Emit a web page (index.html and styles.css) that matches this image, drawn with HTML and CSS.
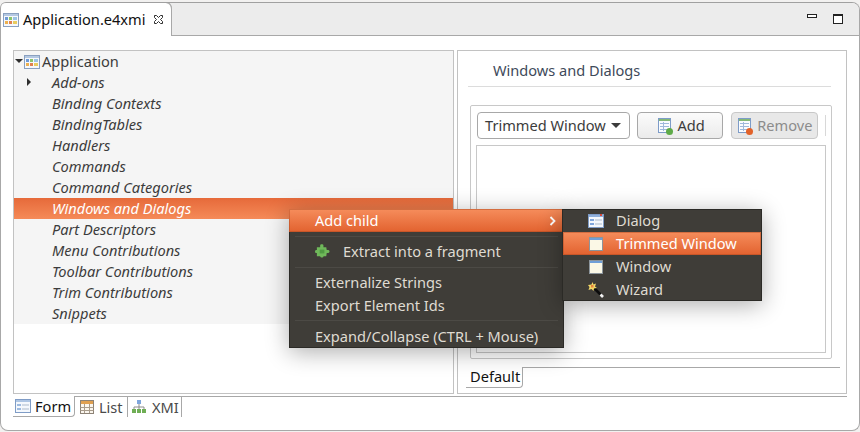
FILE: index.html
```html
<!DOCTYPE html>
<html lang="en">
<head>
<meta charset="utf-8">
<title>Application.e4xmi</title>
<link rel="stylesheet" href="styles.css">
</head>
<body>
<svg class="defs" width="0" height="0" aria-hidden="true">
  <symbol id="i-app" viewBox="0 0 16 16">
    <rect x="0.500" y="1.500" width="15" height="13" fill="#f6f8fb" stroke="#8aa0c0"/>
    <rect x="1" y="2" width="14" height="2" fill="#b4c8e2"/>
    <rect x="2" y="5" width="3" height="3" fill="#6f9ad6"/><rect x="6" y="5" width="3" height="3" fill="#8cc46c"/><rect x="10" y="5" width="4" height="3" fill="#9cc4e4"/>
    <rect x="2" y="9" width="3" height="3" fill="#ecb050"/><rect x="6" y="9" width="3" height="3" fill="#e08050"/><rect x="10" y="9" width="4" height="3" fill="#e8cc60"/>
  </symbol>
  <symbol id="i-form" viewBox="0 0 16 16">
    <rect x="0.500" y="1.500" width="15" height="13" fill="#f4f8fd" stroke="#7f9cc6"/>
    <rect x="1" y="2" width="14" height="2" fill="#adc5e4"/>
    <rect x="2" y="6" width="4" height="2" fill="#9dbae0"/><rect x="2" y="10" width="4" height="2" fill="#9dbae0"/>
    <rect x="7" y="6" width="7" height="2" fill="#d0d9e4"/><rect x="7" y="10" width="7" height="2" fill="#d0d9e4"/>
  </symbol>
  <symbol id="i-dialog" viewBox="0 0 16 16">
    <rect x="0.500" y="1.500" width="15" height="13" fill="#f4f8fd" stroke="#7f9cc6"/>
    <rect x="1" y="2" width="14" height="2" fill="#8fb0dc"/>
    <rect x="12" y="1" width="2" height="2" fill="#d84a3a"/>
    <rect x="2" y="6" width="4" height="2" fill="#7fa6dc"/><rect x="2" y="10" width="4" height="2" fill="#7fa6dc"/>
    <rect x="7" y="6" width="7" height="2" fill="#d0d9e4"/><rect x="7" y="10" width="7" height="2" fill="#d0d9e4"/>
  </symbol>
  <symbol id="i-window" viewBox="0 0 14 14">
    <rect x="0.500" y="0.500" width="13" height="13" fill="#fbf8e6" stroke="#8c959c"/>
    <rect x="1" y="1" width="12" height="2" fill="#6f9fd8"/>
  </symbol>
  <symbol id="i-table" viewBox="0 0 16 16">
    <rect x="1.500" y="1.500" width="13" height="13" fill="#fbf6ee" stroke="#8d8377"/>
    <rect x="2" y="2" width="12" height="3" fill="#e0a050"/>
    <path d="M1.500 8.500h13M1.500 11.500h13M5.500 5v9M10.500 5v9" stroke="#a89c8c" fill="none"/>
  </symbol>
  <symbol id="i-tree" viewBox="0 0 16 16">
    <rect x="6" y="1" width="4" height="4" fill="#7fa6dc"/>
    <path d="M8 5v3M3 10V8h10v2M8 8v2" stroke="#8d8d8d" fill="none"/>
    <rect x="1" y="10" width="4" height="4" fill="#6fae55"/><rect x="6" y="10" width="4" height="4" fill="#6fae55"/><rect x="11" y="10" width="4" height="4" fill="#6fae55"/>
  </symbol>
  <symbol id="i-sheet" viewBox="0 0 16 16">
    <rect x="1.500" y="0.500" width="12" height="14" fill="#fafcff" stroke="#7d9cc8"/>
    <rect x="2" y="1" width="11" height="2" fill="#84b878"/>
    <path d="M3 5.500h9M3 8.500h9M3 11.500h9M6.500 4v9" stroke="#9fb9dc" fill="none"/>
  </symbol>
</svg>

<main class="editor">
  <header class="tabbar">
    <div class="filetab">
      <svg class="ico"><use href="#i-app"/></svg>
      <span class="filetab-name">Application.e4xmi</span>
      <svg class="close" viewBox="0 0 11 11"><path d="M1.500 1.500h2l2 2 2-2h2v2l-2 2 2 2v2h-2l-2-2-2 2h-2v-2l2-2-2-2z" fill="#fff" stroke="#2e2e2e"/></svg>
    </div>
    <div class="winctl">
      <span class="ctl-min"></span>
      <span class="ctl-max"></span>
    </div>
  </header>

  <section class="workspace">
    <div class="panes">
      <div class="tree-pane">
        <ul class="tree">
          <li class="row row-root"><span class="tw tw-open"></span><svg class="ico"><use href="#i-app"/></svg><span>Application</span></li>
          <li class="row"><span class="tw tw-closed"></span><em>Add-ons</em></li>
          <li class="row"><em>Binding Contexts</em></li>
          <li class="row"><em>BindingTables</em></li>
          <li class="row"><em>Handlers</em></li>
          <li class="row"><em>Commands</em></li>
          <li class="row"><em>Command Categories</em></li>
          <li class="row row-sel"><em>Windows and Dialogs</em></li>
          <li class="row"><em>Part Descriptors</em></li>
          <li class="row"><em>Menu Contributions</em></li>
          <li class="row"><em>Toolbar Contributions</em></li>
          <li class="row"><em>Trim Contributions</em></li>
          <li class="row"><em>Snippets</em></li>
        </ul>
      </div>
      <div class="detail-pane">
        <h2 class="detail-title">Windows and Dialogs</h2>
        <div class="group">
          <div class="toolbar">
            <div class="combo"><span>Trimmed Window</span><i class="caret"></i></div>
            <div class="btn"><svg class="ico"><use href="#i-sheet"/></svg><b class="badge badge-add"></b><span>Add</span></div>
            <div class="btn btn-off"><svg class="ico"><use href="#i-sheet"/></svg><b class="badge badge-rem"></b><span>Remove</span></div>
            <i class="toolbar-end"></i>
          </div>
          <div class="listbox"></div>
        </div>
        <div class="subtabs">
          <div class="subtab">Default</div>
          <div class="subtab-rest"></div>
        </div>
      </div>
    </div>
    <nav class="bottomtabs">
      <div class="btab btab-on"><svg class="ico"><use href="#i-form"/></svg><span>Form</span></div>
      <div class="btab btab-list"><svg class="ico"><use href="#i-table"/></svg><span>List</span></div>
      <div class="btab btab-xmi"><svg class="ico"><use href="#i-tree"/></svg><span>XMI</span></div>
      <div class="btab-rest"></div>
    </nav>
  </section>
</main>

<div class="menu menu-main">
  <div class="mi mi-hot mi-first"><span>Add child</span><svg class="chev" viewBox="0 0 7 10"><path d="M1.500 1l4 4-4 4" fill="none" stroke="#fff" stroke-width="1.800"/></svg></div>
  <hr class="sep sep-a">
  <div class="mi mi-icon"><svg class="puzzle" viewBox="0 0 16 16"><path d="M5.500 1.500C5.500 0 9 0 9 1.500V3.500h3l.5 3c2-.6 3 .3 3 1.500s-1 2-3 1.500l-.5 3.500H9c.5 2-3.500 2-3.500 0H2V9.500C.5 10 0 9 0 8s.5-2 2-1.500V3.500h3.500z" fill="#6fb85a"/><path d="M5 6h5v4H5z" fill="#4f9a42"/></svg><span>Extract into a fragment</span></div>
  <hr class="sep sep-b">
  <div class="mi">Externalize Strings</div>
  <div class="mi">Export Element Ids</div>
  <hr class="sep sep-c">
  <div class="mi">Expand/Collapse (CTRL + Mouse)</div>
</div>

<div class="menu menu-sub">
  <div class="si si-first"><svg class="ico"><use href="#i-dialog"/></svg><span>Dialog</span></div>
  <div class="si mi-hot"><svg class="ico-w"><use href="#i-window"/></svg><span>Trimmed Window</span></div>
  <div class="si"><svg class="ico-w"><use href="#i-window"/></svg><span>Window</span></div>
  <div class="si"><svg class="ico" viewBox="0 0 16 16"><path d="M6 6l7 7" stroke="#0c0c0c" stroke-width="2.600"/><path d="M12.500 12.500l2.500 2.500" stroke="#f0f0f0" stroke-width="2.600"/><path d="M4.500 0l1 2.500 2.500-1-1 3 2 1.500-3 .5-.5 2.500-2-2-3 1 1-3L0 3l3.500-.5z" fill="#f2d868"/><path d="M3 3h2.500v2.500H3z" fill="#e8843c"/></svg><span>Wizard</span></div>
</div>
</body>
</html>
```
FILE: styles.css
```css
* { box-sizing: border-box; }
html, body { margin: 0; padding: 0; height: 432px; overflow: hidden; background: #f2f1f0; }
body { font-family: "Noto Sans", "Open Sans", sans-serif; font-size: 14.6px; line-height: 19px; color: #3c3c3c; }
.defs { position: absolute; }
ul { list-style: none; margin: 0; padding: 0; }
.ico { width: 16px; height: 16px; flex: none; display: block; }
.ico-w { width: 14px; height: 14px; flex: none; display: block; }

.editor { position: relative; height: 429px; margin-top: 2px; background: #fff; border: 1px solid #a8a8a8; border-top-color: #a0a0a0; border-radius: 6px 8px 8px 8px; display: flex; flex-direction: column; overflow: hidden; }

.tabbar { height: 33px; flex: none; background: #ececec; border-bottom: 1px solid #a8a8a8; display: flex; justify-content: space-between; }
.filetab { width: 171px; height: 33px; background: #fff; border-right: 1px solid #a8a8a8; border-radius: 0 6px 0 0; display: flex; align-items: center; padding-left: 2px; box-shadow: 0 -1px 0 #a8a8a8; }
.filetab-name { margin-left: 4px; color: #111; white-space: nowrap; }
.close { width: 11px; height: 11px; margin-left: 7px; flex: none; }
.winctl { display: flex; align-items: flex-start; gap: 16px; padding: 11px 16px 0 0; }
.ctl-min { width: 10px; height: 4px; border: 1px solid #222; background: #fff; }
.ctl-max { width: 10px; height: 10px; border: 1px solid #222; border-top-width: 2px; background: #fff; }

.workspace { flex: 1; display: flex; flex-direction: column; padding: 14px 12px 0 12px; }
.panes { display: flex; gap: 3px; height: 344px; flex: none; }

.tree-pane { width: 441px; border: 1px solid #c2c2c2; background: #fff; }
.tree { background: #f5f5f5; }
.row { height: 21px; display: flex; align-items: center; padding-left: 38px; position: relative; color: #3c3c3c; white-space: nowrap; }
.row em { font-style: italic; }
.row-root { padding-left: 10px; gap: 2px; }
.row-sel { background: linear-gradient(#e66a3a, #f58a58); color: #fff; }
.tw { position: absolute; width: 0; height: 0; }
.tw-open { left: 1px; top: 8px; border-left: 4px solid transparent; border-right: 4px solid transparent; border-top: 4px solid #2e2e2e; }
.tw-closed { left: 13px; top: 6px; border-top: 4px solid transparent; border-bottom: 4px solid transparent; border-left: 4px solid #2e2e2e; }

.detail-pane { flex: 1; width: 389px; border: 1px solid #c2c2c2; background: #fff; display: flex; flex-direction: column; padding: 0 5px 0 8px; }
.detail-title { margin: 0 10px 0 2px; height: 36px; border-bottom: 1px solid #dcdcdc; padding: 10px 0 0 25px; font-size: 14.6px; font-weight: 400; color: #3e4a5a; line-height: 19px; }
.group { margin: 18px 7px 0 4px; width: 362px; height: 254px; border: 1px solid #c8c8c8; border-radius: 2px; padding: 6px 5px 0 5px; }
.toolbar { display: flex; gap: 8px; height: 27px; padding-left: 1px; position: relative; }
.toolbar-end { width: 1px; height: 21px; margin: 3px 0 0 -1px; background: #d8d8d8; }
.combo { width: 153px; margin-right: -1px; border: 1px solid #a8a8a8; border-radius: 4px; background: #fff; display: flex; align-items: center; justify-content: space-between; padding: 0 8px 0 7px; white-space: nowrap; }
.caret { width: 0; height: 0; border-left: 5px solid transparent; border-right: 5px solid transparent; border-top: 5px solid #3c3c3c; }
.btn { position: relative; width: 87px; border: 1px solid #a8a8a8; border-radius: 4px; background: linear-gradient(#fbfbfb, #ebebeb); display: flex; align-items: center; padding-left: 19px; gap: 5px; }
.btn-off { background: #e8e8e8; border-color: #c8c8c8; color: #8c8c8c; padding-left: 5px; gap: 4px; }
.badge { position: absolute; width: 7px; height: 7px; border-radius: 50%; left: 28px; top: 15px; }
.btn-off .badge { left: 14px; }
.badge-add { background: #5eaa48; }
.badge-rem { background: #e2622a; }
.listbox { width: 350px; height: 208px; margin-top: 6px; border: 1px solid #c8c8c8; background: #fff; }

.subtabs { display: flex; margin-top: 8px; height: 21px; }
.subtab { width: 57px; height: 21px; border: 1px solid #a8a8a8; border-top: 0; border-left: 0; border-radius: 0 0 4px 0; color: #111; padding-left: 4px; line-height: 19px; }
.subtab-rest { width: 317px; border-top: 1px solid #a8a8a8; }

.bottomtabs { display: flex; height: 22px; margin-top: 2px; }
.btab { display: flex; align-items: center; gap: 4px; height: 21px; padding: 0 2px; border-top: 1px solid #a8a8a8; border-right: 1px solid #a8a8a8; color: #4a4a4a; white-space: nowrap; }
.btab-on { width: 62px; border-top: 0; color: #111; border-bottom: 1px solid #a8a8a8; border-radius: 0 0 4px 0; }
.btab-list { width: 53px; padding-left: 4px; }
.btab-xmi { width: 54px; padding-left: 3px; gap: 5px; }
.btab-rest { width: 666px; border-top: 1px solid #a8a8a8; }

.menu { position: absolute; background: #3f3d38; border: 1px solid #2b2a26; color: #dfdbd2; box-shadow: 0 4px 22px rgba(0,0,0,.32); }
.menu-main { left: 289px; top: 209px; width: 275px; height: 139px; overflow: visible; }
.menu-sub { left: 562px; top: 209px; width: 200px; height: 92px; }
.mi { height: 23px; display: flex; align-items: center; padding-left: 25px; white-space: nowrap; }
.mi-first { margin: -1px -1px 0; padding-left: 26px; padding-right: 8px; justify-content: space-between; }
.mi-hot { background: linear-gradient(#f68d5c, #e2622f); color: #fff; box-shadow: inset 0 0 0 1px rgba(170,70,30,.45); }
.mi-icon { height: 30px; padding-bottom: 2px; }
.mi-icon span { margin-left: 13px; }
.puzzle { width: 15px; height: 15px; flex: none; }
.chev { width: 7px; height: 10px; }
.sep { border: 0; height: 1px; background: #4c4a45; margin-left: 5px; margin-right: 5px; }
.sep-a { margin-top: 4px; margin-bottom: 0; }
.sep-b { margin-top: 0; margin-bottom: 3px; }
.sep-c { margin-top: 3px; margin-bottom: 4px; }
.si { height: 23px; display: flex; align-items: center; padding-left: 25px; gap: 12px; white-space: nowrap; }
.si-first { margin-top: -1px; }
.si .ico-w { margin-left: 1px; margin-right: 1px; }
```
